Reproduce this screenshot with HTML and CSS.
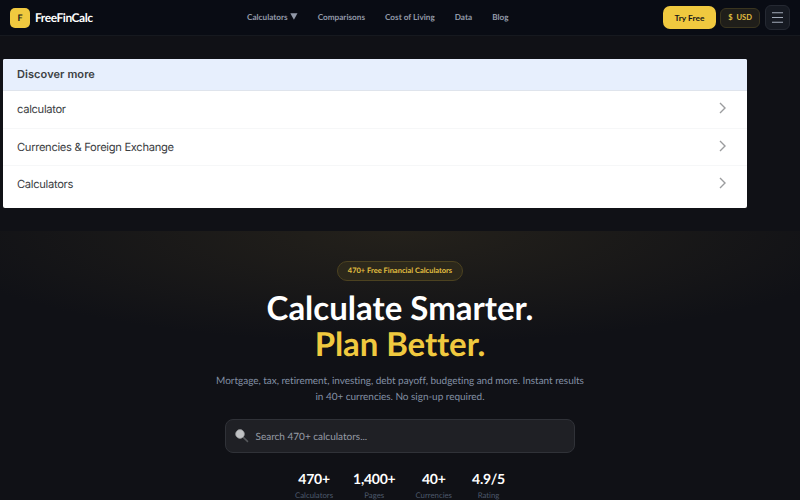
FILE: index.html
```html
<!DOCTYPE html>
<html lang="en">
<head>
    <meta charset="UTF-8">
    <title>FreeFinCalc</title>
    <link rel="stylesheet" href="styles.css">
</head>
<body>
    <header class="header">
        <a class="brand">
            <span class="logo">F</span>
            <span class="brand-name">FreeFinCalc</span>
        </a>
        <nav class="nav">
            <a>Calculators <svg width="8" height="7" viewBox="0 0 8 7"><path d="M.3 .3h7.2L3.9 6.8z" fill="currentColor"/></svg></a>
            <a>Comparisons</a>
            <a>Cost of Living</a>
            <a>Data</a>
            <a>Blog</a>
        </nav>
        <div class="actions">
            <button class="try">Try Free</button>
            <button class="currency"><span>$</span><span>USD</span></button>
            <button class="menu" aria-label="Menu">
                <svg width="11" height="11" viewBox="0 0 11 11"><path d="M0 .8h11M0 5.5h11M0 10.2h11" stroke="#a3abb9" stroke-width="1.1"/></svg>
            </button>
        </div>
    </header>

    <section class="discover">
        <h2>Discover more</h2>
        <a class="row"><span>calculator</span>
            <svg width="7" height="12" viewBox="0 0 7 12"><path d="M1 1l5 5-5 5"/></svg>
        </a>
        <a class="row"><span>Currencies &amp; Foreign Exchange</span>
            <svg width="7" height="12" viewBox="0 0 7 12"><path d="M1 1l5 5-5 5"/></svg>
        </a>
        <a class="row"><span>Calculators</span>
            <svg width="7" height="12" viewBox="0 0 7 12"><path d="M1 1l5 5-5 5"/></svg>
        </a>
    </section>

    <main class="hero">
        <div class="badge">470+ Free Financial Calculators</div>
        <h1>
            <span>Calculate Smarter.</span>
            <span class="gold">Plan Better.</span>
        </h1>
        <p class="lead">Mortgage, tax, retirement, investing, debt payoff, budgeting and more. Instant results<br>in 40+ currencies. No sign-up required.</p>
        <div class="search">
            <svg width="14" height="14" viewBox="0 0 14 14">
                <path d="M8.2 8.2l4.3 4.2" stroke="#55575b" stroke-width="1.6" stroke-linecap="round"/>
                <circle cx="5" cy="5" r="4.4" fill="#bfc1c3" stroke="#929497" stroke-width=".7"/>
            </svg>
            <span>Search 470+ calculators...</span>
        </div>
        <div class="stats">
            <div class="stat"><b>470+</b><span>Calculators</span></div>
            <div class="stat"><b>1,400+</b><span>Pages</span></div>
            <div class="stat"><b>40+</b><span>Currencies</span></div>
            <div class="stat"><b>4.9/5</b><span>Rating</span></div>
        </div>
    </main>
</body>
</html>
```
FILE: styles.css
```css
* {
    box-sizing: border-box;
}
body {
    margin: 0;
    height: 500px;
    overflow: hidden;
    background: #101116;
    color: #fff;
    font-family: Lato, "Liberation Sans", sans-serif;
    font-variant-ligatures: none;
    text-rendering: geometricPrecision;
}
button {
    font-family: inherit;
    padding: 0;
}
.header {
    height: 36px;
    padding: 0 10px;
    display: grid;
    grid-template-columns: 237px 1fr auto;
    align-items: center;
    background: #090c14;
    border-bottom: 1px solid #16191f;
}
.brand {
    display: flex;
    align-items: center;
    gap: 5px;
}
.logo {
    width: 20px;
    height: 20px;
    border-radius: 5px;
    background: #f0c93f;
    color: #16171a;
    font-size: 9px;
    font-weight: 700;
    line-height: 20px;
    text-align: center;
}
.brand-name {
    font-size: 12px;
    font-weight: 700;
    letter-spacing: -0.45px;
}
.nav {
    display: flex;
    gap: 20px;
    margin-top: -2px;
    color: #9299a8;
    font-size: 8.2px;
    font-weight: 700;
    line-height: 12px;
    white-space: nowrap;
}
.actions {
    display: flex;
    align-items: center;
    gap: 5px;
}
.try {
    width: 53px;
    height: 23px;
    border: 0;
    border-radius: 7px;
    background: #f0c93f;
    color: #141519;
    font-size: 8.4px;
    font-weight: 700;
    line-height: 22px;
}
.currency {
    width: 40px;
    height: 20px;
    margin-left: -1px;
    display: flex;
    align-items: center;
    justify-content: center;
    gap: 4px;
    border: 1px solid #3a351f;
    border-radius: 6px;
    background: #1f1e1a;
    color: #e0be40;
    font-size: 7.5px;
    font-weight: 700;
}
.menu {
    width: 25px;
    height: 25px;
    display: flex;
    align-items: center;
    justify-content: center;
    border: 1px solid #252932;
    border-radius: 6px;
    background: #161a22;
}

.discover {
    width: 744px;
    height: 149px;
    margin: 23px 0 23px 3px;
    border-radius: 2px;
    overflow: hidden;
    background: #fff;
    color: #3c4043;
    font-family: Inter, "Liberation Sans", sans-serif;
}
.discover h2 {
    height: 31px;
    margin: 0;
    padding: 0 14px;
    background: #e7effd;
    font-size: 11px;
    font-weight: 600;
    line-height: 31px;
    letter-spacing: 0.08px;
}
.row {
    height: 37.5px;
    padding: 0 21px 0 14px;
    display: flex;
    align-items: center;
    justify-content: space-between;
    border-top: 1px solid #f6f7f8;
    font-size: 11.2px;
    letter-spacing: -0.32px;
}
.row:nth-of-type(1) {
    border-top-color: #dfe4ec;
}
.row svg {
    margin-bottom: 2px;
    fill: none;
    stroke: #9b9c9e;
    stroke-width: 1.4;
}

.hero {
    height: 269px;
    padding-top: 30px;
    display: flex;
    flex-direction: column;
    align-items: center;
    background: radial-gradient(ellipse 480px 112px at 50% 0, #24211b, #101116);
    text-align: center;
}
.hero > * {
    flex-shrink: 0;
}
.badge {
    width: 126px;
    height: 20px;
    border: 1px solid #4c4220;
    border-radius: 10px;
    background: #2c281b;
    color: #e2bf40;
    font-size: 7.5px;
    font-weight: 700;
    line-height: 18px;
    white-space: nowrap;
}
h1 {
    margin: 10px 0 0;
    font-size: 33px;
    font-weight: 700;
    line-height: 35px;
}
h1 span {
    display: block;
}
.gold {
    margin-top: 1px;
    color: #f0c93f;
    letter-spacing: -0.1px;
}
.lead {
    margin: 11px 0 0;
    color: #8390a5;
    font-size: 10px;
    line-height: 16px;
    letter-spacing: -0.03px;
    white-space: nowrap;
}
.search {
    width: 350px;
    height: 34px;
    margin-top: 14px;
    padding: 0 9px;
    display: flex;
    align-items: center;
    gap: 6.5px;
    border: 1px solid #303238;
    border-radius: 8px;
    background: #1f2025;
    color: #969ba5;
    font-size: 10px;
}
.search span {
    padding-top: 1px;
}
.stats {
    margin-top: 18px;
    display: flex;
    gap: 20px;
}
.stat {
    display: flex;
    flex-direction: column;
    align-items: center;
}
.stat b {
    font-size: 14px;
    line-height: 16px;
    letter-spacing: -0.25px;
}
.stat span {
    margin-top: 3px;
    color: #4d596c;
    font-size: 7.8px;
    line-height: 10px;
}
```
